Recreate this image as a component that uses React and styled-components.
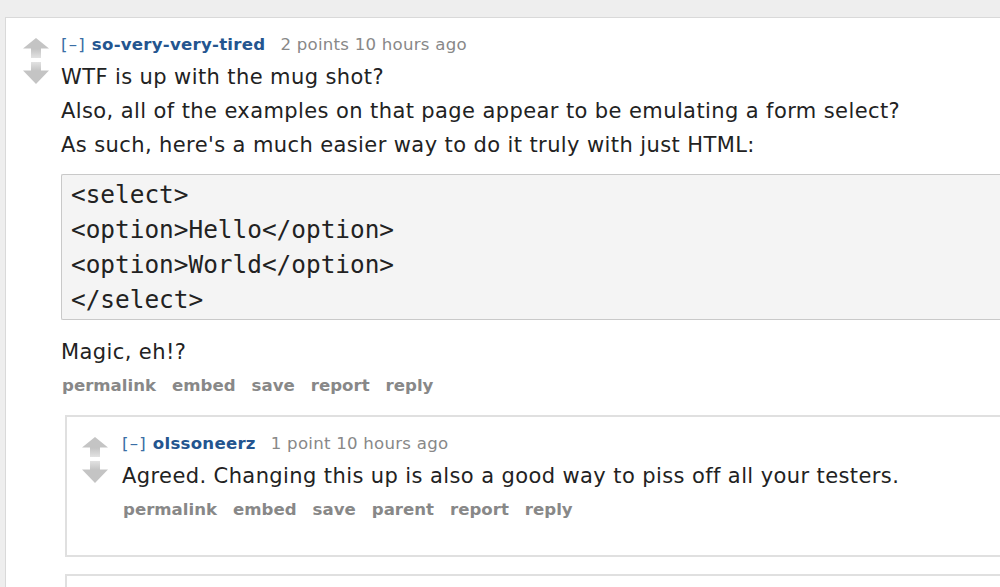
import React from "react";
import styled, { createGlobalStyle } from "styled-components";

const Global = createGlobalStyle`
  html, body { margin: 0; padding: 0; background: #eeeeee; overflow: hidden; }
  body { font-family: "DejaVu Sans", Verdana, sans-serif; }
`;

const Page = styled.div`
  padding: 17px 0 0 5px;
  height: 587px;
  box-sizing: border-box;
`;

const Box = styled.div`
  background: #fff;
  border: ${(p) => (p.$outer ? "1px solid #d9d9d9" : "2px solid #e0e0e0")};
  border-right: none;
  margin-right: -40px;
  margin-left: ${(p) => (p.$outer ? "0" : "4px")};
  margin-top: ${(p) => p.$mt || 0}px;
  padding: 17px 0 ${(p) => p.$pb || 0}px 0;
  min-height: ${(p) => p.$minh || 0}px;
  display: flex;
  align-items: flex-start;
`;

const Midcol = styled.div`
  width: 55px;
  flex: none;
  box-sizing: border-box;
  padding-left: ${(p) => p.$pad}px;
  padding-top: 3px;
  display: flex;
  flex-direction: column;
  gap: 4px;
`;

const Entry = styled.div`
  flex: 1;
  min-width: 0;
`;

const Tagline = styled.div`
  font-size: 16.6px;
  letter-spacing: 0.25px;
  line-height: 20px;
  color: #888;
  white-space: nowrap;
`;

const Expand = styled.span`
  color: #3a6ea5;
  letter-spacing: 1.2px;
  margin-right: 6px;
`;

const Author = styled.span`
  color: #24558f;
  font-weight: bold;
  margin-right: 15px;
`;

const Body = styled.div`
  margin-top: 5px;
  font-size: 21px;
  letter-spacing: 0.4px;
  line-height: 34px;
  color: #222;
`;

const P = styled.p`
  margin: 0;
  white-space: nowrap;
`;

const Pre = styled.pre`
  margin: 12px 0 15px 0;
  background: #f4f4f4;
  border: 1px solid #c9c9c9;
  border-right: none;
  border-radius: 2px 0 0 2px;
  padding: 2px 9px;
  font-family: "DejaVu Sans Mono", monospace;
  font-size: 24.4px;
  letter-spacing: 0;
  line-height: 35px;
  color: #222;
`;

const Buttons = styled.ul`
  list-style: none;
  margin: 7px 0 0 0;
  padding: 0 0 0 1px;
  display: flex;
  gap: 16px;
  font-size: 16.6px;
  letter-spacing: 0;
  line-height: 20px;
  font-weight: bold;
  color: #888;
`;

const Children = styled.div`
  margin-top: 19px;
`;

const UpArrow = () => (
  <svg width="26" height="20" viewBox="0 0 26 20">
    <defs>
      <linearGradient id="ug" x1="0" y1="0" x2="0" y2="1">
        <stop offset="0.55" stopColor="#c4c4c4" />
        <stop offset="1" stopColor="#e2e2e2" />
      </linearGradient>
    </defs>
    <path d="M13 0 L26 10.5 H18 V20 H8 V10.5 H0 Z" fill="url(#ug)" />
  </svg>
);

const DownArrow = () => (
  <svg width="26" height="22" viewBox="0 0 26 22">
    <defs>
      <linearGradient id="dg" x1="0" y1="0" x2="0" y2="1">
        <stop offset="0" stopColor="#e2e2e2" />
        <stop offset="0.4" stopColor="#c4c4c4" />
      </linearGradient>
    </defs>
    <path d="M8 0 H18 V8.5 H26 L13 22 L0 8.5 H8 Z" fill="url(#dg)" />
  </svg>
);

const Votes = ({ pad }) => (
  <Midcol $pad={pad}>
    <UpArrow />
    <DownArrow />
  </Midcol>
);

const Header = ({ author, meta }) => (
  <Tagline>
    <Expand>[–]</Expand>
    <Author>{author}</Author>
    {meta}
  </Tagline>
);

export default function App() {
  return (
    <>
      <Global />
      <Page>
        <Box $outer $minh={600}>
          <Votes pad={17} />
          <Entry>
            <Header author="so-very-very-tired" meta="2 points 10 hours ago" />
            <Body>
              <P>WTF is up with the mug shot?</P>
              <P>Also, all of the examples on that page appear to be emulating a form select?</P>
              <P>As such, here's a much easier way to do it truly with just HTML:</P>
              <Pre>{`<select>
<option>Hello</option>
<option>World</option>
</select>`}</Pre>
              <P>Magic, eh!?</P>
            </Body>
            <Buttons>
              <li>permalink</li>
              <li>embed</li>
              <li>save</li>
              <li>report</li>
              <li>reply</li>
            </Buttons>
            <Children>
              <Box $pb={35}>
                <Votes pad={15} />
                <Entry>
                  <Header author="olssoneerz" meta="1 point 10 hours ago" />
                  <Body>
                    <P>Agreed. Changing this up is also a good way to piss off all your testers.</P>
                  </Body>
                  <Buttons>
                    <li>permalink</li>
                    <li>embed</li>
                    <li>save</li>
                    <li>parent</li>
                    <li>report</li>
                    <li>reply</li>
                  </Buttons>
                </Entry>
              </Box>
              <Box $mt={17} $minh={60}>
                <Votes pad={15} />
                <Entry />
              </Box>
            </Children>
          </Entry>
        </Box>
      </Page>
    </>
  );
}
